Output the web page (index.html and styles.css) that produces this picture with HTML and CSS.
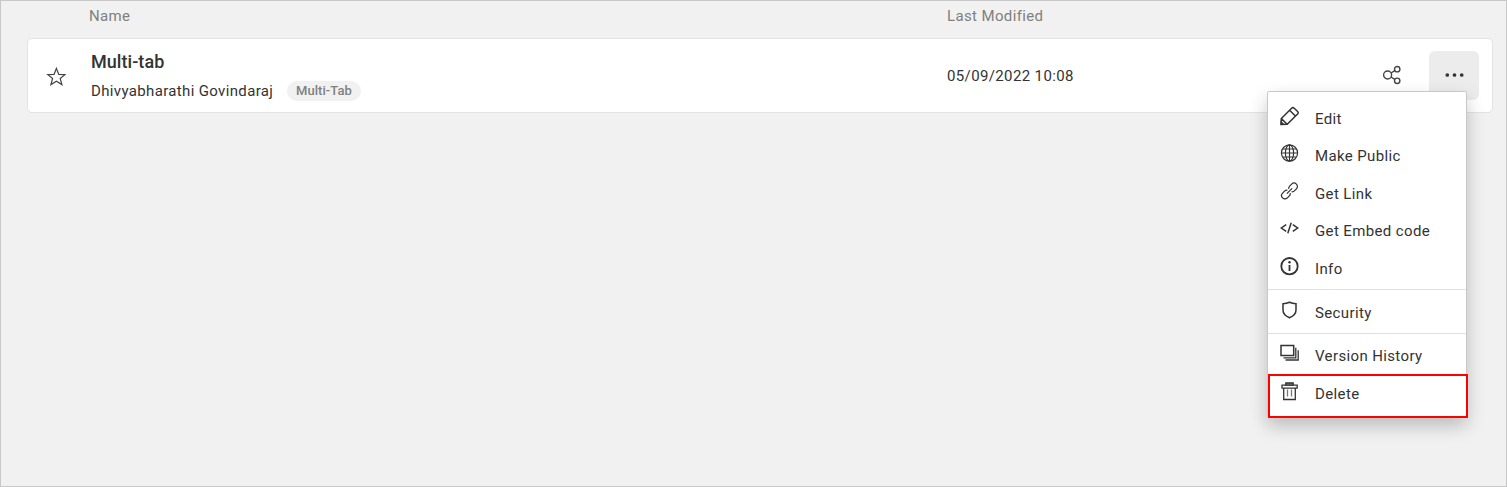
FILE: index.html
```html
<!DOCTYPE html>
<html lang="en">
<head>
<meta charset="utf-8">
<title>Dashboards</title>
<link rel="stylesheet" href="styles.css">
</head>
<body>
<main class="page">
  <header class="columns">
    <span class="col-name">Name</span>
    <span>Last Modified</span>
  </header>
  <section class="row">
    <div class="star">
      <svg width="20" height="20" viewBox="0 0 20 20"><path d="M10.4 1.4 12.7 7.3 19 7.6 14.2 11.5 15.9 17.6 10.4 14.3 4.9 17.6 6.6 11.5 1.8 7.6 8.1 7.3Z"/></svg>
    </div>
    <div class="details">
      <div class="title">Multi-tab</div>
      <div class="meta"><span class="owner">Dhivyabharathi Govindaraj</span><span class="tag">Multi-Tab</span></div>
    </div>
    <time class="date">05/09/2022 10:08</time>
    <div class="share">
      <svg width="20" height="20" viewBox="0 0 20 20"><circle cx="5.6" cy="10" r="4"/><circle cx="15.2" cy="4.2" r="2.7"/><circle cx="15.2" cy="15.8" r="2.7"/><path d="M9 8 12.8 5.7M9 12 12.8 14.3"/></svg>
    </div>
    <div class="more">
      <svg width="20" height="6" viewBox="0 0 20 6"><g class="solid"><circle cx="3.3" cy="3" r="1.85"/><circle cx="10.5" cy="3" r="1.85"/><circle cx="17.7" cy="3" r="1.85"/></g></svg>
      <nav class="menu">
        <div class="item"><svg width="20" height="20" viewBox="0 0 20 20"><path class="bold" d="M1 18.4 1.3 12.5 11.6 2.2Q12.9 1 14.2 2.2L17.6 5.5Q18.8 6.8 17.6 8.1L7.2 18.2ZM9.6 4.2 15.6 10.2M1.4 12.6 7.1 18.2"/><path class="solid" d="M.6 19V14.6L5 18.8Z"/></svg><span>Edit</span></div>
        <div class="item"><svg width="20" height="20" viewBox="0 0 20 20"><g class="thin"><circle cx="9.5" cy="10" r="8.1"/><ellipse cx="9.5" cy="10" rx="4.1" ry="8.1"/><path d="M9.5 2V18M1.5 10H17.5M2.8 6H16.2M2.8 14H16.2"/></g></svg><span>Make Public</span></div>
        <div class="item"><svg width="20" height="20" viewBox="0 0 20 20"><g transform="translate(9.5 10) rotate(-45) scale(.94) translate(-10 -10)"><path d="M8.9 7.9C8.2 6.7 7.2 6.4 6.2 6.4H3.2A3.6 3.6 0 0 0 3.2 13.6H6.2C7.2 13.6 8.2 13.3 8.9 12.1M11.1 7.9C11.8 6.7 12.8 6.4 13.8 6.4H16.8A3.6 3.6 0 0 1 16.8 13.6H13.8C12.8 13.6 11.8 13.3 11.1 12.1M6 10H14"/></g></svg><span>Get Link</span></div>
        <div class="item"><svg width="20" height="20" viewBox="0 0 20 20"><path class="bold" d="M6.2 6.7 1.3 10 6.2 13.3M12.8 6.7 17.7 10 12.8 13.3M11.2 4.8 7.8 15.2"/></svg><span>Get Embed code</span></div>
        <div class="item"><svg width="20" height="20" viewBox="0 0 20 20"><circle class="heavy" cx="9.5" cy="10.2" r="8.2"/><path class="heavy" d="M9.5 9V15"/><circle class="solid" cx="9.5" cy="6.2" r="1.2"/></svg><span>Info</span></div>
        <hr>
        <div class="item"><svg width="20" height="20" viewBox="0 0 20 20"><path class="bold" d="M3 3.7Q6.6 3.7 9.5 2.3 12.4 3.7 16 3.7V10C16 14 12.6 16.5 9.5 17.7 6.4 16.5 3 14 3 10Z"/></svg><span>Security</span></div>
        <hr>
        <div class="item version"><svg width="20" height="20" viewBox="0 0 20 20"><path class="bold" d="M1 2.5H13.7V12.5H1Z"/><path d="M3.5 14.8H15.8V4.8M5.5 17H18.2V7.2"/></svg><span>Version History</span></div>
        <div class="item"><svg width="20" height="20" viewBox="0 0 20 20"><path d="M2 4.2H17.2V7.2H2ZM3.7 7.2V18.5H15.3V7.2"/><path class="slats" d="M7.5 8.5V15.5M11.5 8.5V15.5"/><path class="lid" d="M5.8 4.2V2H13.2V4.2Z"/></svg><span>Delete</span></div>
        <div class="highlight"></div>
      </nav>
    </div>
  </section>
</main>
</body>
</html>
```
FILE: styles.css
```css
* { box-sizing: border-box; }
body { margin: 0; }
.page {
  height: 487px;
  padding: 0 13px 0 26px;
  background: #f1f1f1;
  border: 1px solid #c8c8c8;
  font: 400 15px/20px Roboto, sans-serif;
  letter-spacing: .37px;
  color: #333;
}
.columns {
  display: flex;
  height: 37px;
  padding: 5px 0 0 62px;
  color: #808080;
}
.col-name { width: 858px; }
.row {
  display: flex;
  height: 75px;
  background: #fff;
  border: 1px solid #e3e3e3;
  border-radius: 5px;
}
svg {
  display: block;
  flex: none;
  fill: none;
  stroke: #333;
  stroke-width: 1.3;
}
.solid { fill: #333; stroke: none; }
.thin { stroke-width: 1.15; }
.bold { stroke-width: 1.5; }
.heavy { stroke-width: 1.8; }
.lid { fill: #888; }
.slats { stroke: #777; }
.star { width: 63px; padding: 28px 0 0 18px; }
.star svg { stroke-width: 1.2; stroke: #444; }
.details { width: 856px; padding-top: 11px; }
.title { font-size: 18px; line-height: 24px; font-weight: 500; letter-spacing: .05px; }
.meta { display: flex; align-items: center; margin-top: 7px; }
.owner { width: 196px; line-height: 21px; letter-spacing: .35px; }
.tag {
  height: 20px;
  padding: 0 9px;
  border-radius: 10px;
  background: #f1f1f1;
  color: #808080;
  font-size: 13px;
  line-height: 19px;
  font-weight: 500;
  letter-spacing: .06px;
}
.meta { height: 20px; }
.date { width: 435px; padding-top: 27px; }
.share { width: 47px; padding-top: 26px; }
.share svg, .more > svg { stroke: #444; stroke-width: 1.4; }
.more {
  position: relative;
  width: 50px;
  height: 49px;
  margin-top: 12px;
  border-radius: 6px;
  background: #ececec;
}
.more > svg { margin: 21px 0 0 15px; }
.menu {
  position: absolute;
  top: 40px;
  left: -162px;
  width: 200px;
  height: 327px;
  padding-top: 6.75px;
  background: #fff;
  border: 1px solid #c8c8c8;
  border-radius: 2px;
  box-shadow: 0 8px 18px rgba(0, 0, 0, .22);
}
.item { display: flex; height: 37.5px; padding: 7px 0 0 12px; }
.item span { margin: 3px 0 0 15px; }
hr { margin: 2.6px 0 3.4px; border: 0; border-top: 1px solid #e0e0e0; }
.version { margin-top: -1.5px; }
.highlight {
  position: absolute;
  top: 282px;
  left: 0;
  width: 200px;
  height: 44px;
  border: 2px solid #f00;
}
```
